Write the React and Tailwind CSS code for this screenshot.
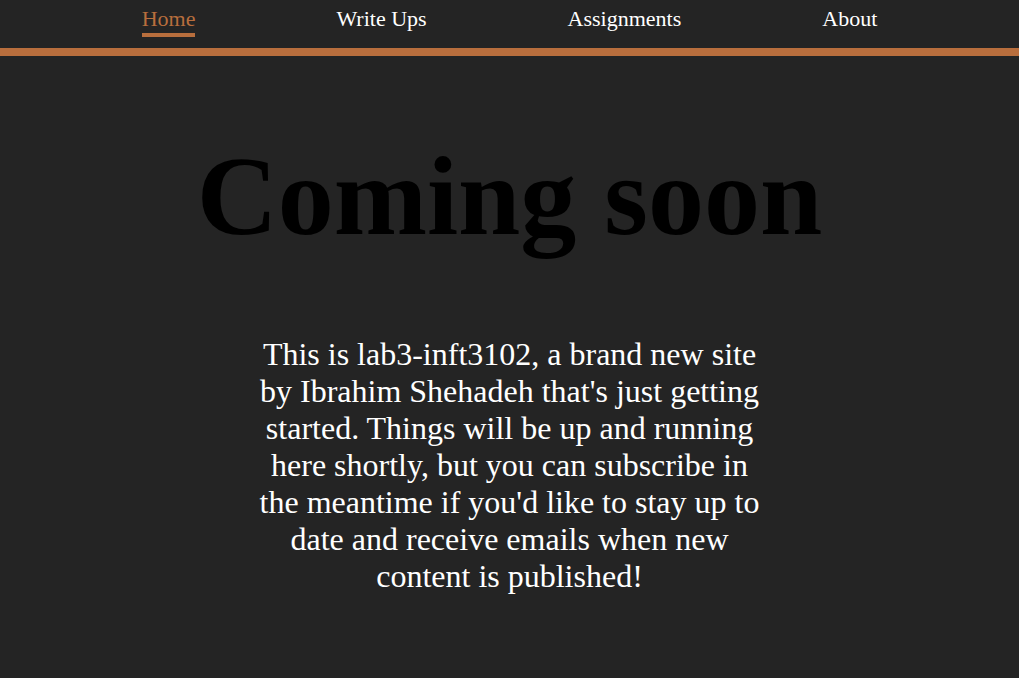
export default function App() {
  const links = ["Home", "Write Ups", "Assignments", "About"];

  return (
    <div className="min-h-[678px] bg-[#242424] font-['Liberation_Serif',serif]">
      <nav className="border-b-8 border-[#b86e3d]">
        <ul className="flex justify-center gap-[141px] h-[48px] pt-[6px]">
          {links.map((name, i) => (
            <li key={name} className="flex flex-col items-stretch">
              <a
                href="#"
                className={
                  i === 0
                    ? "text-[22px] leading-[25px] text-[#b86e3d]"
                    : "text-[22px] leading-[25px] text-white"
                }
              >
                {name}
              </a>
              {i === 0 && <span className="mt-[2px] h-[4px] bg-[#b86e3d]" />}
            </li>
          ))}
        </ul>
      </nav>

      <main className="flex flex-col items-center">
        <h1 className="mt-[76px] text-[112px] leading-[128px] font-bold text-black">
          Coming soon
        </h1>
        <p className="mt-[76px] w-[510px] text-center text-[32px] leading-[37px] text-white">
          This is lab3-inft3102, a brand new site by Ibrahim Shehadeh that's just getting
          started. Things will be up and running here shortly, but you can subscribe in the
          meantime if you'd like to stay up to date and receive emails when new content is
          published!
        </p>
      </main>
    </div>
  );
}
